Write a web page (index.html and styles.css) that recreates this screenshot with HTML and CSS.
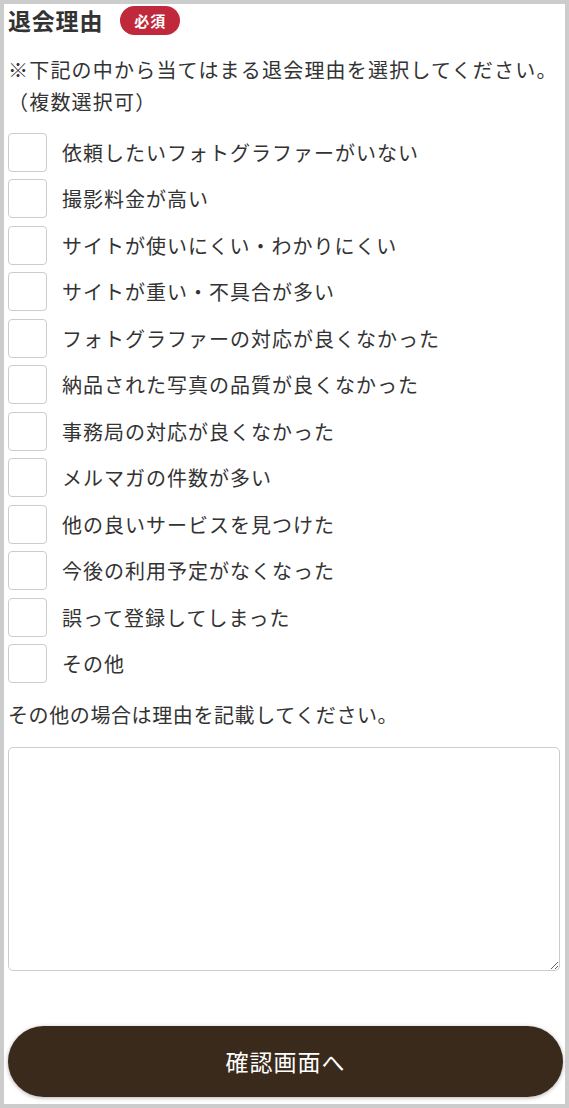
FILE: index.html
```html
<!DOCTYPE html>
<html lang="ja">
<head>
  <meta charset="UTF-8" />
  <title>退会手続き</title>
  <link rel="stylesheet" href="styles.css">
</head>
<body>
  <form class="withdraw-form">
    <div class="form-title">
      <h2>退会理由</h2>
      <span class="required">必須</span>
    </div>
    <p class="note">※下記の中から当てはまる退会理由を選択してください。<br>（複数選択可）</p>

    <div class="reasons">
      <label class="reason"><input type="checkbox" name="reason"> 依頼したいフォトグラファーがいない</label>
      <label class="reason"><input type="checkbox" name="reason"> 撮影料金が高い</label>
      <label class="reason"><input type="checkbox" name="reason"> サイトが使いにくい・わかりにくい</label>
      <label class="reason"><input type="checkbox" name="reason"> サイトが重い・不具合が多い</label>
      <label class="reason"><input type="checkbox" name="reason"> フォトグラファーの対応が良くなかった</label>
      <label class="reason"><input type="checkbox" name="reason"> 納品された写真の品質が良くなかった</label>
      <label class="reason"><input type="checkbox" name="reason"> 事務局の対応が良くなかった</label>
      <label class="reason"><input type="checkbox" name="reason"> メルマガの件数が多い</label>
      <label class="reason"><input type="checkbox" name="reason"> 他の良いサービスを見つけた</label>
      <label class="reason"><input type="checkbox" name="reason"> 今後の利用予定がなくなった</label>
      <label class="reason"><input type="checkbox" name="reason"> 誤って登録してしまった</label>
      <label class="reason"><input type="checkbox" name="reason"> その他</label>
    </div>

    <p class="other-note">その他の場合は理由を記載してください。</p>
    <textarea class="other-text" name="other"></textarea>

    <button type="button" class="submit-btn">確認画面へ</button>
  </form>
</body>
</html>
```

FILE: styles.css
```css
html {
  background: #cccccc;
}

body {
  margin: 4px;
  min-height: 1100px;
  box-sizing: border-box;
  background: #fff;
  font-family: "Noto Sans CJK JP", "Noto Sans", sans-serif;
  color: #333;
}

.withdraw-form {
  padding: 1px 5px 0 4px;
}

.form-title {
  display: flex;
  align-items: center;
  height: 30px;
}

.form-title h2 {
  margin: 0 17px 0 0;
  font-size: 23px;
  letter-spacing: 0.8px;
  line-height: 30px;
}

.required {
  display: inline-block;
  background: #c0283b;
  color: #fff;
  font-size: 15px;
  font-weight: bold;
  letter-spacing: 1px;
  line-height: 29px;
  padding: 0 14px;
  border-radius: 15px;
}

.note {
  margin: 19px 0 0;
  font-size: 20px;
  letter-spacing: 1.2px;
  line-height: 32px;
}

.reasons {
  display: flex;
  flex-direction: column;
  gap: 8.5px;
  margin-top: 15px;
}

.reason {
  display: flex;
  align-items: center;
  font-size: 20px;
  letter-spacing: 1px;
  height: 38px;
}

.reason input[type="checkbox"] {
  appearance: none;
  -webkit-appearance: none;
  width: 39px;
  height: 39px;
  margin: 0 15px 0 0;
  border: 1px solid #ccc;
  border-radius: 4px;
  background: #fff;
  flex-shrink: 0;
}

.other-note {
  margin: 16px 0 0;
  font-size: 20px;
  letter-spacing: 0.6px;
  line-height: 32px;
}

.other-text {
  display: block;
  width: 100%;
  height: 224px;
  box-sizing: border-box;
  margin-top: 16px;
  border: 1px solid #ccc;
  border-radius: 5px;
  font-family: inherit;
  font-size: 16px;
}

.submit-btn {
  display: block;
  width: calc(100% + 3px);
  height: 71px;
  margin-top: 55px;
  border: none;
  border-radius: 36px;
  background: #3a2a1c;
  color: #fff;
  font-family: inherit;
  font-size: 23px;
  letter-spacing: 1px;
  box-shadow: 0 1px 4px rgba(0,0,0,0.3);
  cursor: pointer;
}
```
